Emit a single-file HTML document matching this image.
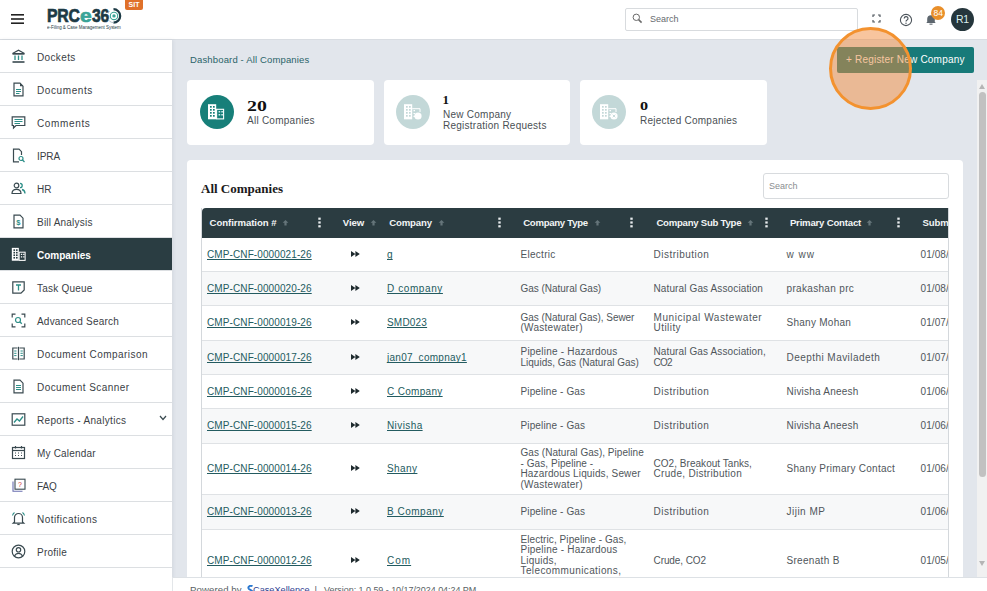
<!DOCTYPE html>
<html><head><meta charset="utf-8">
<style>
*{box-sizing:border-box;margin:0;padding:0}
html,body{width:987px;height:591px;overflow:hidden;background:#e2e6ec;font-family:"Liberation Sans",sans-serif;color:#3d4449}
.abs{position:absolute}
#hdr{position:absolute;left:0;top:0;width:987px;height:40px;background:#fff;border-bottom:1px solid #d9dde2}
#side{position:absolute;left:0;top:40px;width:172px;height:551px;background:#fff;box-shadow:1px 0 4px rgba(30,40,60,0.08)}
.si{position:absolute;left:0;width:172px;height:33px;border-bottom:1px solid #dcdfe2;font-size:10px;letter-spacing:0.35px;color:#3a4045}
.si span{position:absolute;left:37px;top:12px;line-height:12px;white-space:nowrap}
.si svg{position:absolute;left:11px;top:9px}
.si.act{background:#2a3d42;color:#fff;font-weight:bold;letter-spacing:0}
.card{position:absolute;top:80px;height:65px;background:#fff;border-radius:4px}
.circ{position:absolute;left:13px;top:15px;width:34px;height:34px;border-radius:50%}
.num{position:absolute;font-family:"Liberation Serif",serif;font-weight:bold;font-size:15px;color:#111;line-height:15px}
.lbl{position:absolute;font-size:10px;letter-spacing:0.25px;color:#4a4f54;line-height:11px;white-space:nowrap}
#panel{position:absolute;left:187px;top:160px;width:776px;height:440px;background:#fff;border-radius:4px}
#tbl{position:absolute;left:201px;top:208px;width:748px;height:400px;overflow:hidden;border-left:1px solid #d4d8dc;border-right:1px solid #d4d8dc}
.th{position:absolute;left:0;top:0;width:760px;height:30px;background:#2b3c41;border-radius:4px 4px 0 0}
.tht{position:absolute;top:9px;color:#f2f4f5;font-weight:bold;font-size:9.6px;letter-spacing:-0.3px;line-height:12px;white-space:nowrap}
.ar{position:absolute;top:10px;width:7px;height:10px}
.kb{position:absolute;top:9px;width:3px;height:11px}
.row{position:absolute;left:0;width:760px;border-bottom:1px solid #dfe2e5;background:#fff}
.row.alt{background:#f7f8f9}
.c{position:absolute;font-size:10px;line-height:10.6px;color:#50565b;white-space:nowrap}
.lk{color:#235b60;text-decoration:underline;text-underline-offset:1px;text-decoration-skip-ink:none}
#foot{position:absolute;left:172px;top:577px;width:815px;height:14px;background:#fff;border-top:1px solid #dde1e5;border-left:1px solid #e3e6e9}
#sb{position:absolute;left:977px;top:80px;width:10px;height:497px;background:#f1f1f1}
</style></head><body>

<div id="hdr">
  <!-- hamburger -->
  <svg class="abs" style="left:11px;top:13px" width="14" height="12" viewBox="0 0 14 12"><rect x="0" y="1" width="13" height="1.6" fill="#222"/><rect x="0" y="5.2" width="13" height="1.6" fill="#222"/><rect x="0" y="9.4" width="13" height="1.6" fill="#222"/></svg>
  <!-- logo -->
  <div class="abs" style="left:47px;top:6px;height:20px;font-weight:bold;font-size:19px;line-height:20px;color:#1c3a45;white-space:nowrap;-webkit-text-stroke:0.7px currentColor">
    <span class="abs" style="left:0;top:0;transform-origin:0 0;transform:scaleX(0.83);letter-spacing:-0.2px">PRC</span>
    <span class="abs" style="left:32.5px;top:0;transform-origin:0 0;transform:scaleX(1.1);color:#3aa497">e</span>
    <span class="abs" style="left:44.5px;top:0;transform-origin:0 0;transform:scaleX(0.82);letter-spacing:-0.3px">36</span>
  </div>
  <svg class="abs" style="left:108px;top:8px" width="14" height="16" viewBox="0 0 14 16"><path d="M5.5 1.2A6.6 6.6 0 1 1 5.5 14.6" fill="none" stroke="#1c3a45" stroke-width="2.2"/><path d="M5.5 14.6A6.6 6.6 0 0 1 1.5 3" fill="none" stroke="#9fb3b8" stroke-width="0.8"/><circle cx="6" cy="7.9" r="3.7" fill="none" stroke="#3aa497" stroke-width="1.1"/><circle cx="6" cy="7.9" r="1.7" fill="#3aa497"/></svg>
  <div class="abs" style="left:47px;top:25px;font-size:4.6px;line-height:5px;color:#1c3a45;white-space:nowrap;transform-origin:0 0;transform:scaleX(0.97)">e-Filing &amp; Case Management System</div>
  <div class="abs" style="left:125px;top:0;width:18px;height:10px;background:#e0712a;border-radius:0 0 2px 2px;color:#fff;font-weight:bold;font-size:7px;line-height:9px;text-align:center">SIT</div>
  <!-- search -->
  <div class="abs" style="left:625px;top:8px;width:233px;height:23px;border:1px solid #d8dbde;border-radius:2px;background:#fff"></div>
  <svg class="abs" style="left:632px;top:13px" width="11" height="11" viewBox="0 0 11 11"><circle cx="4.3" cy="4.3" r="3.2" fill="none" stroke="#6a6a6a" stroke-width="1"/><line x1="6.6" y1="6.6" x2="9.6" y2="9.6" stroke="#6a6a6a" stroke-width="1.5"/></svg>
  <div class="abs" style="left:650px;top:14px;font-size:9px;line-height:11px;color:#666a6e">Search</div>
  <!-- fullscreen -->
  <svg class="abs" style="left:872px;top:14px" width="9" height="9" viewBox="0 0 9 9" fill="none" stroke="#50585f" stroke-width="1.2"><path d="M1 3V1H3M6 1H8V3M8 6V8H6M3 8H1V6"/></svg>
  <!-- help -->
  <svg class="abs" style="left:899px;top:13px" width="14" height="14" viewBox="0 0 14 14"><circle cx="7" cy="7" r="5.6" fill="none" stroke="#4d555c" stroke-width="1.1"/><path d="M5.2 5.5a1.9 1.9 0 1 1 2.6 1.7c-.5.3-.8.7-.8 1.4" fill="none" stroke="#4d555c" stroke-width="1.2"/><circle cx="7" cy="10.2" r="0.7" fill="#4d555c"/></svg>
  <!-- bell -->
  <svg class="abs" style="left:925px;top:14px" width="12" height="11" viewBox="0 0 12 11"><path d="M2.2 8V5a3.8 3.8 0 0 1 7.6 0V8l1 1H1.2z" fill="#5d666e"/><rect x="4.5" y="9.6" width="3" height="1.1" fill="#5d666e"/></svg>
  <div class="abs" style="left:931.3px;top:6.4px;width:14px;height:14px;border-radius:50%;background:#e98f2a;color:#fff;font-size:8.5px;line-height:14px;text-align:center">84</div>
  <!-- avatar -->
  <div class="abs" style="left:951px;top:8px;width:23px;height:23px;border-radius:50%;background:#25363c;color:#dcefef;font-size:10.5px;letter-spacing:-0.2px;line-height:23px;text-align:center">R1</div>
</div>

<div id="side">
<div class="si" style="top:0px"><svg width="15" height="15" viewBox="0 0 15 15"><path d="M1.5 4.5L7.5 1.2L13.5 4.5Z" fill="none" stroke="#3a4a50" stroke-width="1.2"/><line x1="1.5" y1="5.2" x2="13.5" y2="5.2" stroke="#3a4a50" stroke-width="1"/><path d="M4 6.5V11M7.5 6.5V11M11 6.5V11" stroke="#2e8f88" stroke-width="1.3"/><rect x="1.5" y="12.2" width="12" height="1.6" fill="#3a4a50"/></svg><span style="letter-spacing:0.363px">Dockets</span></div>
<div class="si" style="top:33px"><svg width="15" height="15" viewBox="0 0 15 15"><path d="M3 1.2H9L12 4.2V13.8H3Z" fill="none" stroke="#3a4a50" stroke-width="1.2"/><path d="M9 1.2V4.2H12" fill="#3a4a50"/><path d="M5 7.5H10M5 9.5H10M5 11.5H8.5" stroke="#2e8f88" stroke-width="1"/></svg><span style="letter-spacing:0.591px">Documents</span></div>
<div class="si" style="top:66px"><svg width="15" height="15" viewBox="0 0 15 15"><path d="M1.2 1.8H13.8V10.5H5L2.5 13V10.5H1.2Z" fill="none" stroke="#3a4a50" stroke-width="1.2"/><path d="M3.5 4.5H11.5M3.5 6.5H11.5M3.5 8.5H9" stroke="#2e8f88" stroke-width="1"/></svg><span style="letter-spacing:0.637px">Comments</span></div>
<div class="si" style="top:99px"><svg width="15" height="15" viewBox="0 0 15 15"><path d="M8 13.8H2.5V1.2H8L10.5 3.7V7" fill="none" stroke="#3a4a50" stroke-width="1.2"/><circle cx="10" cy="10.5" r="2" fill="none" stroke="#2e8f88" stroke-width="1.2"/><line x1="11.5" y1="12" x2="13.5" y2="14" stroke="#2e8f88" stroke-width="1.3"/></svg><span style="letter-spacing:-0.047px">IPRA</span></div>
<div class="si" style="top:132px"><svg width="15" height="15" viewBox="0 0 15 15"><circle cx="5.5" cy="4.5" r="2.3" fill="none" stroke="#3a4a50" stroke-width="1.2"/><path d="M1 12.5C1 9.5 3 8.3 5.5 8.3S10 9.5 10 12.5Z" fill="none" stroke="#3a4a50" stroke-width="1.2"/><path d="M9 2.3a2.2 2.2 0 0 1 0 4.4M11 8.5c2 .5 3 2 3 4" fill="none" stroke="#2e8f88" stroke-width="1.3"/></svg><span style="letter-spacing:-0.044px">HR</span></div>
<div class="si" style="top:165px"><svg width="15" height="15" viewBox="0 0 15 15"><path d="M3 1.2H9L12 4.2V13.8H3Z" fill="none" stroke="#3a4a50" stroke-width="1.2"/><text x="7.5" y="11.3" font-size="7.5" font-weight="bold" text-anchor="middle" fill="#2e8f88" font-family="Liberation Sans">$</text></svg><span style="letter-spacing:0.217px">Bill Analysis</span></div>
<div class="si act" style="top:198px"><svg width="29" height="29" viewBox="0 0 34 34" style="left:4.6px;top:1.6px"><rect x="8" y="9.2" width="8.2" height="15.1" fill="#ffffff"/><rect x="9.9" y="10.9" width="1.9" height="1.9" fill="#2a3d42"/><rect x="9.9" y="13.9" width="1.9" height="1.9" fill="#2a3d42"/><rect x="9.9" y="16.9" width="1.9" height="1.9" fill="#2a3d42"/><rect x="9.9" y="19.9" width="1.9" height="1.9" fill="#2a3d42"/><rect x="12.9" y="10.9" width="1.9" height="1.9" fill="#2a3d42"/><rect x="12.9" y="13.9" width="1.9" height="1.9" fill="#2a3d42"/><rect x="12.9" y="16.9" width="1.9" height="1.9" fill="#2a3d42"/><rect x="12.9" y="19.9" width="1.9" height="1.9" fill="#2a3d42"/><rect x="16.6" y="14.3" width="7" height="9.6" fill="none" stroke="#ffffff" stroke-width="1.2"/><path d="M18.6 16.8h1.6M21.3 16.8h1.6M18.6 19.8h1.6M21.3 19.8h1.6" stroke="#ffffff" stroke-width="1.6"/></svg><span style="letter-spacing:-0.012px">Companies</span></div>
<div class="si" style="top:231px"><svg width="15" height="15" viewBox="0 0 15 15"><path d="M1.8 1.8H13.2V10L10 13.2H1.8Z" fill="none" stroke="#3a4a50" stroke-width="1.2"/><path d="M5 5H10M7.5 5V10.5" stroke="#2e8f88" stroke-width="1.3"/></svg><span style="letter-spacing:0.215px">Task Queue</span></div>
<div class="si" style="top:264px"><svg width="15" height="15" viewBox="0 0 15 15"><path d="M1.2 4.5V1.2H4.5M10.5 1.2H13.8V4.5M13.8 10.5V13.8H10.5M4.5 13.8H1.2V10.5" fill="none" stroke="#3a4a50" stroke-width="1.2"/><circle cx="7" cy="7" r="2.5" fill="none" stroke="#2e8f88" stroke-width="1.2"/><line x1="8.8" y1="8.8" x2="10.8" y2="10.8" stroke="#2e8f88" stroke-width="1.3"/></svg><span style="letter-spacing:0.197px">Advanced Search</span></div>
<div class="si" style="top:297px"><svg width="15" height="15" viewBox="0 0 15 15"><path d="M6.5 2H1.8V13H6.5M8.5 2H13.2V13H8.5" fill="none" stroke="#3a4a50" stroke-width="1.2"/><line x1="7.5" y1="0.8" x2="7.5" y2="14.2" stroke="#3a4a50" stroke-width="1.2"/><path d="M3.2 5H5.5M3.2 7.3H5.5M3.2 9.6H5.5M9.5 5H11.8M9.5 7.3H11.8M9.5 9.6H11.8" stroke="#2e8f88" stroke-width="1"/></svg><span style="letter-spacing:0.463px">Document Comparison</span></div>
<div class="si" style="top:330px"><svg width="15" height="15" viewBox="0 0 15 15"><path d="M3 1.2H9L12 4.2V13.8H3Z" fill="none" stroke="#3a4a50" stroke-width="1.2"/><path d="M5 6.5H10M5 8.5H10M5 10.5H10" stroke="#2e8f88" stroke-width="1"/></svg><span style="letter-spacing:0.434px">Document Scanner</span></div>
<div class="si" style="top:363px"><svg width="15" height="15" viewBox="0 0 15 15"><rect x="1.2" y="1.8" width="12.6" height="11.4" fill="none" stroke="#3a4a50" stroke-width="1.2"/><path d="M3 10.5L6 7L8.5 9L12 4.5" fill="none" stroke="#2e8f88" stroke-width="1.3"/></svg><span style="letter-spacing:0.313px">Reports - Analytics</span><svg style="left:159px;top:12px" width="8" height="6" viewBox="0 0 8 6"><path d="M1 1L4 4.5L7 1" fill="none" stroke="#3a4a50" stroke-width="1.2"/></svg></div>
<div class="si" style="top:396px"><svg width="15" height="15" viewBox="0 0 15 15"><rect x="1.5" y="2.5" width="12" height="11" fill="none" stroke="#3a4a50" stroke-width="1.2"/><line x1="1.5" y1="5.5" x2="13.5" y2="5.5" stroke="#3a4a50" stroke-width="1.2"/><path d="M4.5 1V3.5M10.5 1V3.5" stroke="#3a4a50" stroke-width="1.2"/><path d="M4 8H5M7 8H8M10 8H11M4 10.5H5M7 10.5H8M10 10.5H11" stroke="#3a4a50" stroke-width="1.1"/></svg><span style="letter-spacing:0.191px">My Calendar</span></div>
<div class="si" style="top:429px"><svg width="15" height="15" viewBox="0 0 15 15"><rect x="4" y="1.2" width="10" height="10" fill="none" stroke="#3a4a50" stroke-width="1.1"/><path d="M2 3.5V13.2H11.5" fill="none" stroke="#6a6fb0" stroke-width="1.1"/><text x="9" y="8.8" font-size="7" text-anchor="middle" fill="#d03030" font-family="Liberation Sans">?</text></svg><span style="letter-spacing:-0.102px">FAQ</span></div>
<div class="si" style="top:462px"><svg width="15" height="15" viewBox="0 0 15 15"><path d="M3.5 11V6.5a4 4 0 0 1 8 0V11l1.3 1.2H2.2Z" fill="none" stroke="#3a4a50" stroke-width="1.2"/><path d="M6.3 13.5H8.7" stroke="#3a4a50" stroke-width="1.2"/><path d="M1.5 4.5a5 5 0 0 1 2-3M13.5 4.5a5 5 0 0 0-2-3" fill="none" stroke="#2e8f88" stroke-width="1.1"/></svg><span style="letter-spacing:0.453px">Notifications</span></div>
<div class="si" style="top:495px"><svg width="15" height="15" viewBox="0 0 15 15"><circle cx="7.5" cy="7.5" r="6.3" fill="none" stroke="#3a4a50" stroke-width="1.2"/><circle cx="7.5" cy="5.8" r="2.2" fill="none" stroke="#3a4a50" stroke-width="1.2"/><path d="M3.5 12C4.5 10 6 9.3 7.5 9.3S10.5 10 11.5 12" fill="none" stroke="#3a4a50" stroke-width="1.2"/></svg><span style="letter-spacing:0.243px">Profile</span></div>

</div>

<!-- breadcrumb -->
<div class="abs" style="left:190px;top:54px;font-size:9.5px;letter-spacing:0.15px;line-height:12px;color:#2a6469;white-space:nowrap">Dashboard - All Companies</div>

<!-- register button -->
<div class="abs" style="left:837px;top:47px;width:137px;height:26px;background:#177a79;border-radius:2px;color:#fff;font-size:10px;letter-spacing:0.2px;line-height:26px;padding-left:9px;white-space:nowrap">+ Register New Company</div>

<div class="card" style="left:187px;width:187px"><div class="circ" style="background:#177f79"><svg class="abs" style="left:0;top:0" width="34" height="34" viewBox="0 0 34 34"><rect x="8" y="9.2" width="8.2" height="15.1" fill="#fff"/><rect x="10" y="11" width="1.7" height="1.7" fill="#177f79"/><rect x="10" y="14" width="1.7" height="1.7" fill="#177f79"/><rect x="10" y="17" width="1.7" height="1.7" fill="#177f79"/><rect x="10" y="20" width="1.7" height="1.7" fill="#177f79"/><rect x="13" y="11" width="1.7" height="1.7" fill="#177f79"/><rect x="13" y="14" width="1.7" height="1.7" fill="#177f79"/><rect x="13" y="17" width="1.7" height="1.7" fill="#177f79"/><rect x="13" y="20" width="1.7" height="1.7" fill="#177f79"/><rect x="16.6" y="14.3" width="7" height="9.6" fill="none" stroke="#fff" stroke-width="1.1"/><path d="M18.6 16.8h1.6M21.3 16.8h1.6M18.6 19.8h1.6M21.3 19.8h1.6" stroke="#cfeeee" stroke-width="1.5"/></svg></div><div class="num" style="left:60px;top:19px;transform-origin:0 0;transform:scaleX(1.32)">20</div><div class="lbl" style="left:60px;top:35px">All Companies</div></div>
<div class="card" style="left:384px;width:186px"><div class="circ" style="left:12px;background:#c3d8d8"><svg class="abs" style="left:0;top:0" width="34" height="34" viewBox="0 0 34 34"><rect x="8" y="9.2" width="8.2" height="15.1" fill="#fff"/><rect x="10" y="11" width="1.7" height="1.7" fill="#c3d8d8"/><rect x="10" y="14" width="1.7" height="1.7" fill="#c3d8d8"/><rect x="10" y="17" width="1.7" height="1.7" fill="#c3d8d8"/><rect x="10" y="20" width="1.7" height="1.7" fill="#c3d8d8"/><rect x="13" y="11" width="1.7" height="1.7" fill="#c3d8d8"/><rect x="13" y="14" width="1.7" height="1.7" fill="#c3d8d8"/><rect x="13" y="17" width="1.7" height="1.7" fill="#c3d8d8"/><rect x="13" y="20" width="1.7" height="1.7" fill="#c3d8d8"/><path d="M16.2 13.7H24V17" fill="none" stroke="#fff" stroke-width="1"/><path d="M17.5 15.7h1.5M17.5 18.5h1.5M17.5 21.3h1.5" stroke="#fff" stroke-width="1.2"/><circle cx="22" cy="21" r="3.6" fill="#fff"/></svg></div><div class="num" style="left:58.5px;top:11.5px;font-size:13px">1</div><div class="lbl" style="left:59px;top:29px;line-height:11px">New Company<br>Registration Requests</div></div>
<div class="card" style="left:580px;width:187px"><div class="circ" style="left:12px;background:#c3d8d8"><svg class="abs" style="left:0;top:0" width="34" height="34" viewBox="0 0 34 34"><rect x="8" y="9.2" width="8.2" height="15.1" fill="#fff"/><rect x="10" y="11" width="1.7" height="1.7" fill="#c3d8d8"/><rect x="10" y="14" width="1.7" height="1.7" fill="#c3d8d8"/><rect x="10" y="17" width="1.7" height="1.7" fill="#c3d8d8"/><rect x="10" y="20" width="1.7" height="1.7" fill="#c3d8d8"/><rect x="13" y="11" width="1.7" height="1.7" fill="#c3d8d8"/><rect x="13" y="14" width="1.7" height="1.7" fill="#c3d8d8"/><rect x="13" y="17" width="1.7" height="1.7" fill="#c3d8d8"/><rect x="13" y="20" width="1.7" height="1.7" fill="#c3d8d8"/><path d="M16.2 13.7H24V17" fill="none" stroke="#fff" stroke-width="1"/><path d="M17.5 15.7h1.5M17.5 18.5h1.5M17.5 21.3h1.5" stroke="#fff" stroke-width="1.2"/><circle cx="22" cy="21" r="3.6" fill="#fff"/><path d="M20.7 19.7L23.3 22.3M23.3 19.7L20.7 22.3" stroke="#c3d8d8" stroke-width="0.9"/></svg></div><div class="num" style="left:60px;top:18px;font-size:13.5px;transform-origin:0 0;transform:scaleX(1.2)">0</div><div class="lbl" style="left:60px;top:35px">Rejected Companies</div></div>


<div id="panel"></div>
<div class="abs" style="left:201px;top:181px;font-family:'Liberation Serif',serif;font-weight:bold;font-size:13px;line-height:15px;color:#1a1a1a">All Companies</div>
<div class="abs" style="left:763px;top:173px;width:186px;height:26px;border:1px solid #d8dbde;border-radius:3px;background:#fff"></div>
<div class="abs" style="left:769px;top:181px;font-size:9px;line-height:11px;color:#8a8d90">Search</div>

<div id="tbl">
<div class="th"><div class="tht" style="left:7.5px;letter-spacing:-0.052px">Confirmation #</div><svg class="ar" style="left:80.0px" width="7" height="10" viewBox="0 0 7 10"><path d="M3.5 1.9L6.4 4.7H4.6V7.4H2.4V4.7H0.6Z" fill="#65757a"/></svg><svg class="kb" style="left:115.5px" width="3" height="11" viewBox="0 0 3 11"><rect x="0.3" y="0.6" width="2.4" height="2.2" fill="#e8ecee"/><rect x="0.3" y="4.4" width="2.4" height="2.2" fill="#e8ecee"/><rect x="0.3" y="8.2" width="2.4" height="2.2" fill="#e8ecee"/></svg><div class="tht" style="left:140.8px;letter-spacing:-0.076px">View</div><svg class="ar" style="left:167.5px" width="7" height="10" viewBox="0 0 7 10"><path d="M3.5 1.9L6.4 4.7H4.6V7.4H2.4V4.7H0.6Z" fill="#65757a"/></svg><div class="tht" style="left:187.2px;letter-spacing:-0.134px">Company</div><svg class="ar" style="left:235.5px" width="7" height="10" viewBox="0 0 7 10"><path d="M3.5 1.9L6.4 4.7H4.6V7.4H2.4V4.7H0.6Z" fill="#65757a"/></svg><svg class="kb" style="left:295.5px" width="3" height="11" viewBox="0 0 3 11"><rect x="0.3" y="0.6" width="2.4" height="2.2" fill="#e8ecee"/><rect x="0.3" y="4.4" width="2.4" height="2.2" fill="#e8ecee"/><rect x="0.3" y="8.2" width="2.4" height="2.2" fill="#e8ecee"/></svg><div class="tht" style="left:321.2px;letter-spacing:-0.283px">Company Type</div><svg class="ar" style="left:392.0px" width="7" height="10" viewBox="0 0 7 10"><path d="M3.5 1.9L6.4 4.7H4.6V7.4H2.4V4.7H0.6Z" fill="#65757a"/></svg><svg class="kb" style="left:428.2px" width="3" height="11" viewBox="0 0 3 11"><rect x="0.3" y="0.6" width="2.4" height="2.2" fill="#e8ecee"/><rect x="0.3" y="4.4" width="2.4" height="2.2" fill="#e8ecee"/><rect x="0.3" y="8.2" width="2.4" height="2.2" fill="#e8ecee"/></svg><div class="tht" style="left:454.4px;letter-spacing:-0.250px">Company Sub Type</div><svg class="ar" style="left:545.2px" width="7" height="10" viewBox="0 0 7 10"><path d="M3.5 1.9L6.4 4.7H4.6V7.4H2.4V4.7H0.6Z" fill="#65757a"/></svg><svg class="kb" style="left:562.5px" width="3" height="11" viewBox="0 0 3 11"><rect x="0.3" y="0.6" width="2.4" height="2.2" fill="#e8ecee"/><rect x="0.3" y="4.4" width="2.4" height="2.2" fill="#e8ecee"/><rect x="0.3" y="8.2" width="2.4" height="2.2" fill="#e8ecee"/></svg><div class="tht" style="left:587.9px;letter-spacing:-0.197px">Primary Contact</div><svg class="ar" style="left:664.1px" width="7" height="10" viewBox="0 0 7 10"><path d="M3.5 1.9L6.4 4.7H4.6V7.4H2.4V4.7H0.6Z" fill="#65757a"/></svg><svg class="kb" style="left:695.0px" width="3" height="11" viewBox="0 0 3 11"><rect x="0.3" y="0.6" width="2.4" height="2.2" fill="#e8ecee"/><rect x="0.3" y="4.4" width="2.4" height="2.2" fill="#e8ecee"/><rect x="0.3" y="8.2" width="2.4" height="2.2" fill="#e8ecee"/></svg><div class="tht" style="left:720.5px;letter-spacing:-0.100px">Submitted</div></div>
<div class="row" style="top:30.00px;height:34.00px"><div class="c" style="left:5.0px;top:11.70px"><span class="lk" style="letter-spacing:0.105px">CMP-CNF-0000021-26</span></div><svg class="abs" style="left:149px;top:12.50px" width="9" height="6" viewBox="0 0 9 6"><path d="M0 0L4.4 3L0 6ZM4.4 0L8.8 3L4.4 6Z" fill="#1e2a2e"/></svg><div class="c" style="left:185.0px;top:11.70px"><span class="lk" style="letter-spacing:0.100px">g</span></div><div class="c" style="left:318.5px;top:11.70px"><span style="letter-spacing:0.288px">Electric</span></div><div class="c" style="left:451.5px;top:11.70px"><span style="letter-spacing:0.489px">Distribution</span></div><div class="c" style="left:584.5px;top:11.70px"><span style="letter-spacing:0.985px">w ww</span></div><div class="c" style="left:718.5px;top:11.70px"><span style="letter-spacing:0.100px">01/08/2026</span></div></div>
<div class="row alt" style="top:64.00px;height:34.00px"><div class="c" style="left:5.0px;top:11.70px"><span class="lk" style="letter-spacing:0.105px">CMP-CNF-0000020-26</span></div><svg class="abs" style="left:149px;top:12.50px" width="9" height="6" viewBox="0 0 9 6"><path d="M0 0L4.4 3L0 6ZM4.4 0L8.8 3L4.4 6Z" fill="#1e2a2e"/></svg><div class="c" style="left:185.0px;top:11.70px"><span class="lk" style="letter-spacing:0.591px">D company</span></div><div class="c" style="left:318.5px;top:11.70px"><span style="letter-spacing:-0.027px">Gas (Natural Gas)</span></div><div class="c" style="left:451.5px;top:11.70px"><span style="letter-spacing:0.122px">Natural Gas Association</span></div><div class="c" style="left:584.5px;top:11.70px"><span style="letter-spacing:0.328px">prakashan prc</span></div><div class="c" style="left:718.5px;top:11.70px"><span style="letter-spacing:0.100px">01/08/2026</span></div></div>
<div class="row" style="top:98.00px;height:35.00px"><div class="c" style="left:5.0px;top:12.20px"><span class="lk" style="letter-spacing:0.105px">CMP-CNF-0000019-26</span></div><svg class="abs" style="left:149px;top:13.00px" width="9" height="6" viewBox="0 0 9 6"><path d="M0 0L4.4 3L0 6ZM4.4 0L8.8 3L4.4 6Z" fill="#1e2a2e"/></svg><div class="c" style="left:185.0px;top:12.20px"><span class="lk" style="letter-spacing:0.199px">SMD023</span></div><div class="c" style="left:318.5px;top:6.90px"><span style="letter-spacing:-0.049px">Gas (Natural Gas), Sewer</span><br><span style="letter-spacing:0.265px">(Wastewater)</span></div><div class="c" style="left:451.5px;top:6.90px"><span style="letter-spacing:0.566px">Municipal Wastewater</span><br><span style="letter-spacing:0.443px">Utility</span></div><div class="c" style="left:584.5px;top:12.20px"><span style="letter-spacing:0.270px">Shany Mohan</span></div><div class="c" style="left:718.5px;top:12.20px"><span style="letter-spacing:0.100px">01/07/2026</span></div></div>
<div class="row alt" style="top:133.00px;height:34.00px"><div class="c" style="left:5.0px;top:11.70px"><span class="lk" style="letter-spacing:0.105px">CMP-CNF-0000017-26</span></div><svg class="abs" style="left:149px;top:12.50px" width="9" height="6" viewBox="0 0 9 6"><path d="M0 0L4.4 3L0 6ZM4.4 0L8.8 3L4.4 6Z" fill="#1e2a2e"/></svg><div class="c" style="left:185.0px;top:11.70px"><span class="lk" style="letter-spacing:0.265px">jan07_compnay1</span></div><div class="c" style="left:318.5px;top:6.40px"><span style="letter-spacing:0.209px">Pipeline - Hazardous</span><br><span style="letter-spacing:0.001px">Liquids, Gas (Natural Gas)</span></div><div class="c" style="left:451.5px;top:6.40px"><span style="letter-spacing:0.118px">Natural Gas Association,</span><br><span style="letter-spacing:-0.780px">CO2</span></div><div class="c" style="left:584.5px;top:11.70px"><span style="letter-spacing:0.453px">Deepthi Maviladeth</span></div><div class="c" style="left:718.5px;top:11.70px"><span style="letter-spacing:0.100px">01/07/2026</span></div></div>
<div class="row" style="top:167.00px;height:34.00px"><div class="c" style="left:5.0px;top:11.70px"><span class="lk" style="letter-spacing:0.105px">CMP-CNF-0000016-26</span></div><svg class="abs" style="left:149px;top:12.50px" width="9" height="6" viewBox="0 0 9 6"><path d="M0 0L4.4 3L0 6ZM4.4 0L8.8 3L4.4 6Z" fill="#1e2a2e"/></svg><div class="c" style="left:185.0px;top:11.70px"><span class="lk" style="letter-spacing:0.313px">C Company</span></div><div class="c" style="left:318.5px;top:11.70px"><span style="letter-spacing:0.130px">Pipeline - Gas</span></div><div class="c" style="left:451.5px;top:11.70px"><span style="letter-spacing:0.489px">Distribution</span></div><div class="c" style="left:584.5px;top:11.70px"><span style="letter-spacing:0.221px">Nivisha Aneesh</span></div><div class="c" style="left:718.5px;top:11.70px"><span style="letter-spacing:0.100px">01/06/2026</span></div></div>
<div class="row alt" style="top:201.00px;height:35.00px"><div class="c" style="left:5.0px;top:12.20px"><span class="lk" style="letter-spacing:0.105px">CMP-CNF-0000015-26</span></div><svg class="abs" style="left:149px;top:13.00px" width="9" height="6" viewBox="0 0 9 6"><path d="M0 0L4.4 3L0 6ZM4.4 0L8.8 3L4.4 6Z" fill="#1e2a2e"/></svg><div class="c" style="left:185.0px;top:12.20px"><span class="lk" style="letter-spacing:0.402px">Nivisha</span></div><div class="c" style="left:318.5px;top:12.20px"><span style="letter-spacing:0.130px">Pipeline - Gas</span></div><div class="c" style="left:451.5px;top:12.20px"><span style="letter-spacing:0.489px">Distribution</span></div><div class="c" style="left:584.5px;top:12.20px"><span style="letter-spacing:0.221px">Nivisha Aneesh</span></div><div class="c" style="left:718.5px;top:12.20px"><span style="letter-spacing:0.100px">01/06/2026</span></div></div>
<div class="row" style="top:236.00px;height:51.00px"><div class="c" style="left:5.0px;top:20.20px"><span class="lk" style="letter-spacing:0.105px">CMP-CNF-0000014-26</span></div><svg class="abs" style="left:149px;top:21.00px" width="9" height="6" viewBox="0 0 9 6"><path d="M0 0L4.4 3L0 6ZM4.4 0L8.8 3L4.4 6Z" fill="#1e2a2e"/></svg><div class="c" style="left:185.0px;top:20.20px"><span class="lk" style="letter-spacing:0.412px">Shany</span></div><div class="c" style="left:318.5px;top:4.30px"><span style="letter-spacing:0.036px">Gas (Natural Gas), Pipeline</span><br><span style="letter-spacing:0.057px">- Gas, Pipeline -</span><br><span style="letter-spacing:0.143px">Hazardous Liquids, Sewer</span><br><span style="letter-spacing:0.265px">(Wastewater)</span></div><div class="c" style="left:451.5px;top:14.90px"><span style="letter-spacing:0.040px">CO2, Breakout Tanks,</span><br><span style="letter-spacing:0.305px">Crude, Distribution</span></div><div class="c" style="left:584.5px;top:20.20px"><span style="letter-spacing:0.279px">Shany Primary Contact</span></div><div class="c" style="left:718.5px;top:20.20px"><span style="letter-spacing:0.100px">01/06/2026</span></div></div>
<div class="row alt" style="top:287.00px;height:35.00px"><div class="c" style="left:5.0px;top:12.20px"><span class="lk" style="letter-spacing:0.105px">CMP-CNF-0000013-26</span></div><svg class="abs" style="left:149px;top:13.00px" width="9" height="6" viewBox="0 0 9 6"><path d="M0 0L4.4 3L0 6ZM4.4 0L8.8 3L4.4 6Z" fill="#1e2a2e"/></svg><div class="c" style="left:185.0px;top:12.20px"><span class="lk" style="letter-spacing:0.507px">B Company</span></div><div class="c" style="left:318.5px;top:12.20px"><span style="letter-spacing:0.130px">Pipeline - Gas</span></div><div class="c" style="left:451.5px;top:12.20px"><span style="letter-spacing:0.489px">Distribution</span></div><div class="c" style="left:584.5px;top:12.20px"><span style="letter-spacing:0.485px">Jijin MP</span></div><div class="c" style="left:718.5px;top:12.20px"><span style="letter-spacing:0.100px">01/06/2026</span></div></div>
<div class="row" style="top:322.00px;height:62.00px"><div class="c" style="left:5.0px;top:25.70px"><span class="lk" style="letter-spacing:0.105px">CMP-CNF-0000012-26</span></div><svg class="abs" style="left:149px;top:26.50px" width="9" height="6" viewBox="0 0 9 6"><path d="M0 0L4.4 3L0 6ZM4.4 0L8.8 3L4.4 6Z" fill="#1e2a2e"/></svg><div class="c" style="left:185.0px;top:25.70px"><span class="lk" style="letter-spacing:0.994px">Com</span></div><div class="c" style="left:318.5px;top:4.50px"><span style="letter-spacing:0.078px">Electric, Pipeline - Gas,</span><br><span style="letter-spacing:0.209px">Pipeline - Hazardous</span><br><span style="letter-spacing:0.233px">Liquids,</span><br><span style="letter-spacing:0.396px">Telecommunications,</span><br><span style="letter-spacing:0.100px">Water</span></div><div class="c" style="left:451.5px;top:25.70px"><span style="letter-spacing:-0.084px">Crude, CO2</span></div><div class="c" style="left:584.5px;top:25.70px"><span style="letter-spacing:0.308px">Sreenath B</span></div><div class="c" style="left:718.5px;top:25.70px"><span style="letter-spacing:0.100px">01/05/2026</span></div></div>

</div>

<div id="sb">
  <svg class="abs" style="left:2px;top:4px" width="6" height="5" viewBox="0 0 6 5"><path d="M0 5L3 0L6 5z" fill="#b5b5b5"/></svg>
  <div class="abs" style="left:1.5px;top:12px;width:7px;height:385px;background:#c1c1c1;border-radius:4px"></div>
  <svg class="abs" style="left:2px;top:481px" width="6" height="5" viewBox="0 0 6 5"><path d="M0 0L3 5L6 0z" fill="#b5b5b5"/></svg>
</div>

<div id="foot">
  <div class="abs" style="left:17px;top:6px;font-size:9.6px;letter-spacing:0.1px;line-height:12px;color:#5a5f64;white-space:nowrap">Powered by</div>
  <svg class="abs" style="left:74px;top:7px" width="7" height="10" viewBox="0 0 7 10"><path d="M5.5 1.2C3.5 0.2 1 1.2 1.5 3.2C2 5 5.8 4.8 5.6 7.2C5.4 9 3 9.5 1.2 8.8" fill="none" stroke="#2a78d0" stroke-width="2"/></svg>
  <div class="abs" style="left:80px;top:6px;font-size:9.2px;line-height:12px;color:#2e3d8f;white-space:nowrap;letter-spacing:0px">CaseXellence</div>
  <div class="abs" style="left:141.5px;top:6px;font-size:9.6px;line-height:12px;color:#5a5f64;white-space:nowrap">|</div>
  <div class="abs" style="left:151px;top:6px;font-size:9px;line-height:12px;color:#5a5f64;white-space:nowrap;letter-spacing:-0.05px">Version: 1.0.59 - 10/17/2024 04:24 PM</div>
</div>

<!-- orange click highlight -->
<div class="abs" style="left:829px;top:27px;width:83px;height:83px;border-radius:50%;border:3.4px solid #f3922f;background:rgba(242,140,62,0.5)"></div>

</body></html>
